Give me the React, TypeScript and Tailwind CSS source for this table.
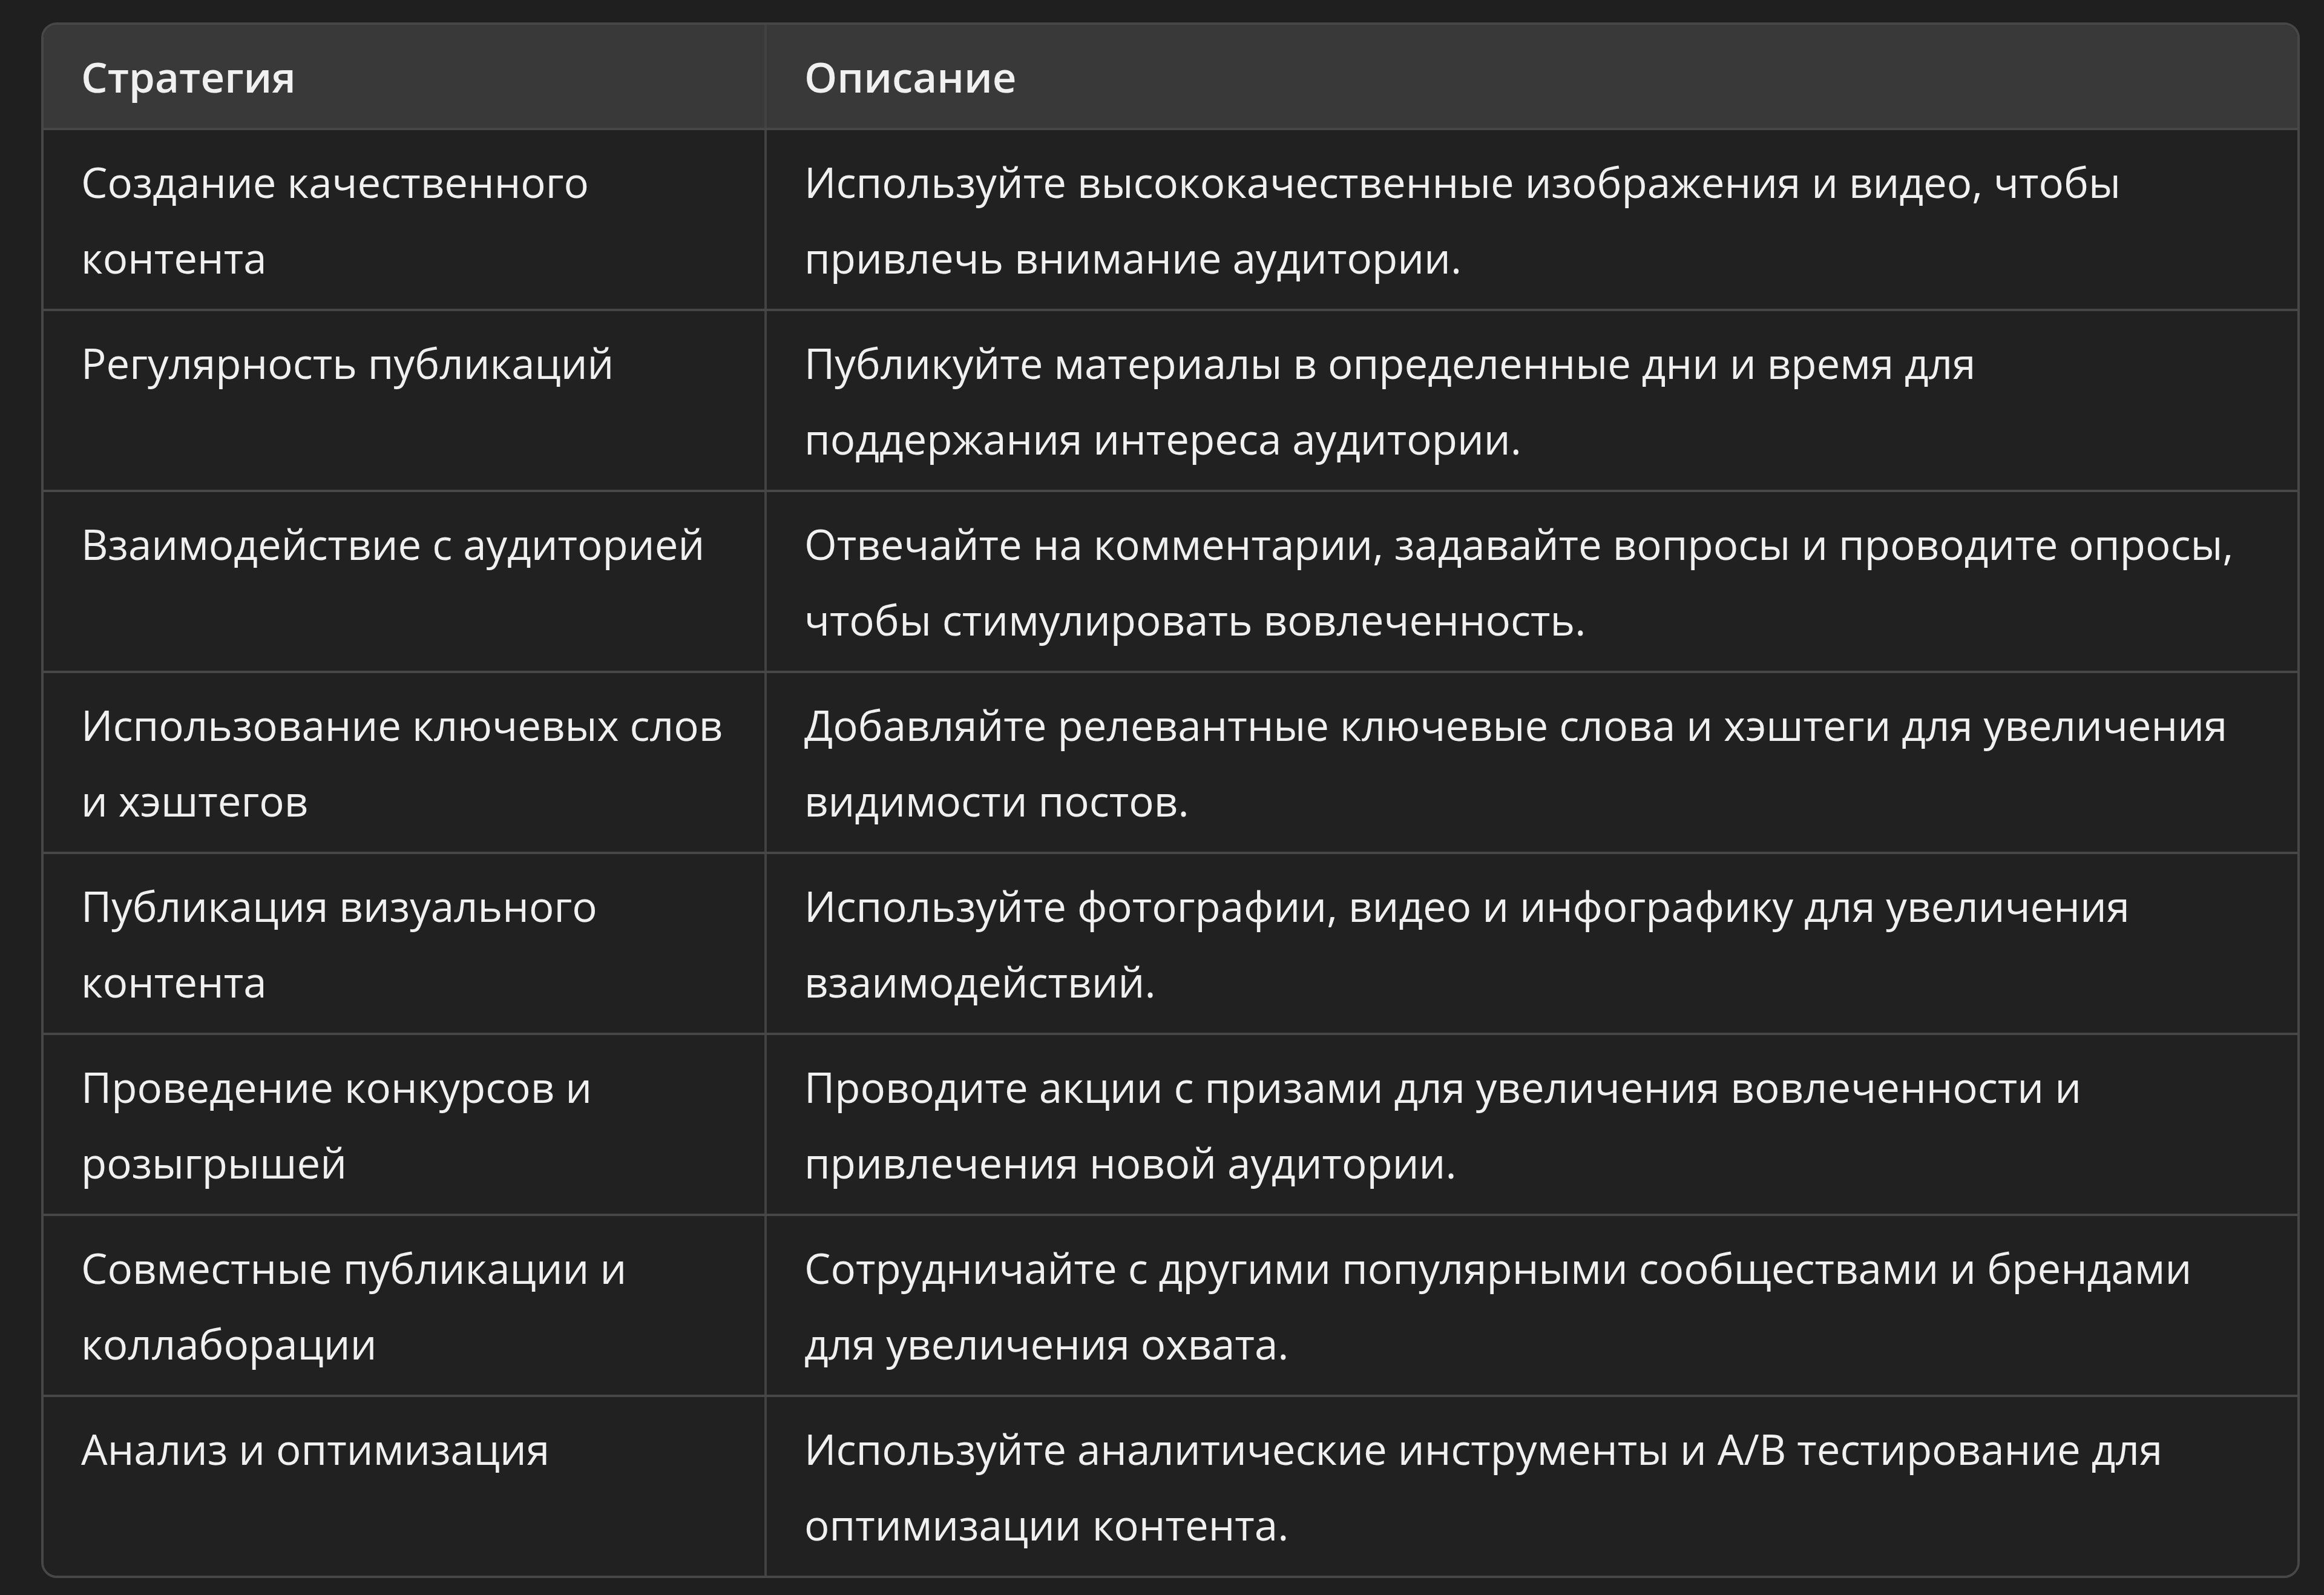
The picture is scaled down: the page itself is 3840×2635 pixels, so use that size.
import React from 'react';

interface Row {
  strategy: string[];
  description: string[];
}

const rows: Row[] = [
  {
    strategy: ['Создание качественного', 'контента'],
    description: ['Используйте высококачественные изображения и видео, чтобы', 'привлечь внимание аудитории.'],
  },
  {
    strategy: ['Регулярность публикаций'],
    description: ['Публикуйте материалы в определенные дни и время для', 'поддержания интереса аудитории.'],
  },
  {
    strategy: ['Взаимодействие с аудиторией'],
    description: ['Отвечайте на комментарии, задавайте вопросы и проводите опросы,', 'чтобы стимулировать вовлеченность.'],
  },
  {
    strategy: ['Использование ключевых слов', 'и хэштегов'],
    description: ['Добавляйте релевантные ключевые слова и хэштеги для увеличения', 'видимости постов.'],
  },
  {
    strategy: ['Публикация визуального', 'контента'],
    description: ['Используйте фотографии, видео и инфографику для увеличения', 'взаимодействий.'],
  },
  {
    strategy: ['Проведение конкурсов и', 'розыгрышей'],
    description: ['Проводите акции с призами для увеличения вовлеченности и', 'привлечения новой аудитории.'],
  },
  {
    strategy: ['Совместные публикации и', 'коллаборации'],
    description: ['Сотрудничайте с другими популярными сообществами и брендами', 'для увеличения охвата.'],
  },
  {
    strategy: ['Анализ и оптимизация'],
    description: ['Используйте аналитические инструменты и A/B тестирование для', 'оптимизации контента.'],
  },
];

const Lines: React.FC<{ lines: string[] }> = ({ lines }) => (
  <>
    {lines.map((line, i) => (
      <div key={i} className="whitespace-nowrap">{line}</div>
    ))}
  </>
);

export default function App() {
  return (
    <div
      className="w-[3840px] h-[2635px] bg-[#1f1f1f] pl-[68px] pt-[37px]"
      style={{ fontFamily: '"Open Sans", "Noto Sans", sans-serif' }}
    >
      <div className="w-[3732px] rounded-[26px] border-[4px] border-[#474747] overflow-hidden text-[69px] leading-[125px] text-[#f0f0f0]">
        {/* Header */}
        <div className="grid grid-cols-[1195px_1fr] bg-[#393939] border-b-[4px] border-[#474747] font-semibold">
          <div className="pl-[62px] pr-[58px] pt-[23px] pb-[22px] border-r-[4px] border-[#424242]">Стратегия</div>
          <div className="pl-[62px] pr-[58px] pt-[23px] pb-[22px]">Описание</div>
        </div>

        {/* Body */}
        {rows.map((row, index) => (
          <div
            key={index}
            className={`grid grid-cols-[1195px_1fr] bg-[#212121] ${index < rows.length - 1 ? 'border-b-[4px] border-[#474747]' : ''}`}
          >
            <div className="pl-[62px] pr-[58px] pt-[23px] pb-[22px] border-r-[4px] border-[#424242]">
              <Lines lines={row.strategy} />
            </div>
            <div className="pl-[62px] pr-[58px] pt-[23px] pb-[22px]">
              <Lines lines={row.description} />
            </div>
          </div>
        ))}
      </div>
    </div>
  );
}
